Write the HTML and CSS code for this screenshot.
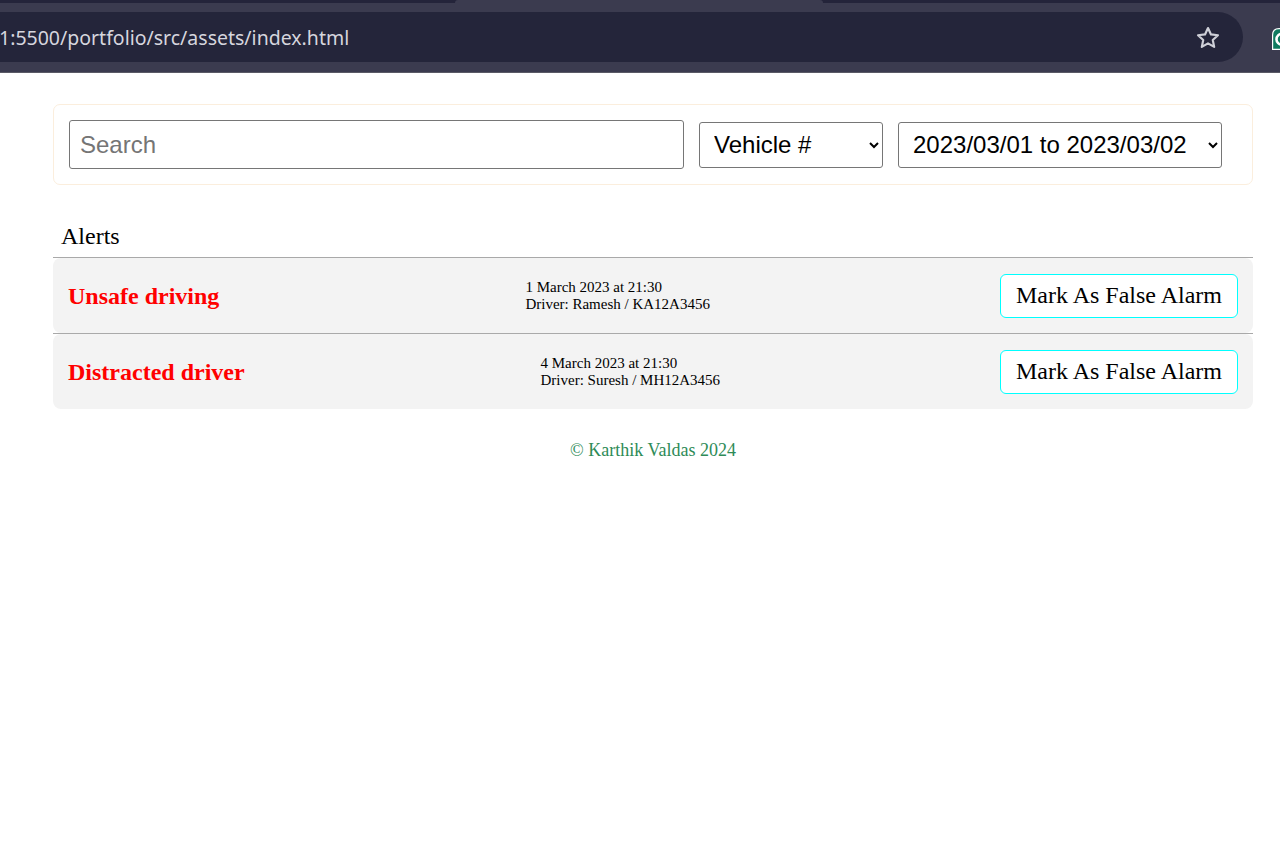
FILE: index.html
```html
<!DOCTYPE html>
<html lang="en">
<head>
<meta charset="utf-8">
<title>Alerts</title>
<link rel="stylesheet" href="styles.css">
</head>
<body>
<header class="chrome">
  <div class="tabstrip"><div class="tab"></div></div>
  <div class="toolbar">
    <div class="omnibox">
      <span class="url">1:5500/portfolio/src/assets/index.html</span>
      <svg class="star" width="26" height="26" viewBox="0 0 24 24" aria-hidden="true">
        <path d="M12 2.8l2.75 5.9 6.45.75-4.8 4.4 1.3 6.35L12 17l-5.7 3.2 1.3-6.35-4.8-4.4 6.45-.75z" fill="none" stroke="#cfd0d8" stroke-width="2" stroke-linejoin="round"/>
      </svg>
    </div>
    <div class="ext">
      <svg width="22" height="26" viewBox="0 0 22 26" aria-hidden="true">
        <path d="M0.6 9 Q0.6 2.6 7 2.6 L15 2.6 Q21.4 2.6 21.4 9 L21.4 23.4 L0.6 23.4 Z" fill="#0f7a5f" stroke="#ffffff" stroke-width="1.2"/>
        <path d="M14 9.5 A5.5 5.5 0 1 0 14 17" fill="none" stroke="#ffffff" stroke-width="2.6"/>
      </svg>
    </div>
  </div>
</header>

<main class="page">
  <section class="filters">
    <input class="search" type="text" placeholder="Search">
    <select class="select vehicle">
      <option>Vehicle #</option>
    </select>
    <select class="select range">
      <option>2023/03/01 to 2023/03/02</option>
    </select>
  </section>

  <h2 class="alerts-title">Alerts</h2>

  <div class="alert-item">
    <div class="alert-card">
      <h3 class="alert-name">Unsafe driving</h3>
      <div class="alert-meta">
        <div>1 March 2023 at 21:30</div>
        <div>Driver: Ramesh / KA12A3456</div>
      </div>
      <button class="false-btn" type="button">Mark As False Alarm</button>
    </div>
  </div>

  <div class="alert-item">
    <div class="alert-card">
      <h3 class="alert-name">Distracted driver</h3>
      <div class="alert-meta">
        <div>4 March 2023 at 21:30</div>
        <div>Driver: Suresh / MH12A3456</div>
      </div>
      <button class="false-btn" type="button">Mark As False Alarm</button>
    </div>
  </div>

  <footer class="footer">© Karthik Valdas 2024</footer>
</main>
</body>
</html>
```

FILE: styles.css
```css
* {
  box-sizing: border-box;
}

html, body {
  margin: 0;
  padding: 0;
  background: #ffffff;
}

body {
  font-family: "Liberation Serif", "Times New Roman", serif;
  color: #000;
  overflow: hidden;
}

/* Browser chrome */
.chrome {
  display: flex;
  flex-direction: column;
  background: #3b3b4f;
  border-bottom: 1px solid #5a5a66;
}

.tabstrip {
  height: 3px;
  background: #24243a;
  display: flex;
}

.tab {
  margin-left: 455px;
  width: 368px;
  background: #3b3b4f;
  border-radius: 4px 4px 0 0;
}

.toolbar {
  height: 69px;
  display: flex;
  align-items: flex-start;
  padding-top: 9px;
  overflow: hidden;
}

.omnibox {
  flex: 0 0 1243px;
  height: 50px;
  background: #24253a;
  border-radius: 0 25px 25px 0;
  display: flex;
  align-items: center;
  justify-content: space-between;
  padding-right: 22px;
}

.url {
  font-family: "Noto Sans", "Open Sans", sans-serif;
  font-size: 19.5px;
  color: #d6d6de;
  letter-spacing: 0;
  margin-left: -1px;
}

.star {
  display: block;
  margin-top: 1px;
}

.ext {
  flex: 0 0 auto;
  margin-left: 29px;
  margin-top: 14px;
}

.ext svg {
  display: block;
}

/* Page */
.page {
  width: 1200px;
  margin-left: 53px;
  padding-top: 31px;
}

.filters {
  display: flex;
  align-items: center;
  gap: 15px;
  padding: 15px;
  border: 1px solid #fbeedd;
  border-radius: 7px;
}

.search {
  width: 615px;
  height: 49px;
  padding: 0 10px;
  font-family: "Liberation Sans", Arial, sans-serif;
  font-size: 24px;
  border: 1px solid #767676;
  border-radius: 3px;
  color: #000;
}

.search::placeholder {
  color: #757575;
}

.select {
  height: 46px;
  font-family: "Liberation Sans", Arial, sans-serif;
  font-size: 24px;
  border: 1px solid #767676;
  border-radius: 3px;
  background: #fff;
  color: #000;
  padding: 0 8px 0 10px;
}

.vehicle {
  width: 184px;
}

.range {
  width: 324px;
}

.alerts-title {
  margin: 37px 0 0;
  padding: 0 0 6px 8px;
  font-size: 24px;
  font-weight: normal;
  line-height: 29px;
  border-bottom: 1px solid #a9a9a9;
}

.alert-item + .alert-item {
  border-top: 1px solid #a9a9a9;
}

.alert-card {
  display: flex;
  align-items: center;
  justify-content: space-between;
  background: #f3f3f3;
  border-radius: 8px;
  padding: 15px;
  min-height: 75px;
}

.alert-name {
  margin: 0;
  color: #ff0000;
  font-size: 24px;
  font-weight: bold;
  line-height: 28px;
}

.alert-meta {
  font-size: 15px;
  line-height: 17px;
  padding-left: 16px;
}

.false-btn {
  font-family: "Liberation Serif", "Times New Roman", serif;
  font-size: 24px;
  height: 44px;
  width: 238px;
  padding: 0 14px;
  background: #ffffff;
  color: #000;
  border: 1px solid #00ffff;
  border-radius: 6px;
  margin-left: 0;
}

.footer {
  text-align: center;
  color: #2e8b57;
  font-size: 18px;
  margin-top: 31px;
}
```
